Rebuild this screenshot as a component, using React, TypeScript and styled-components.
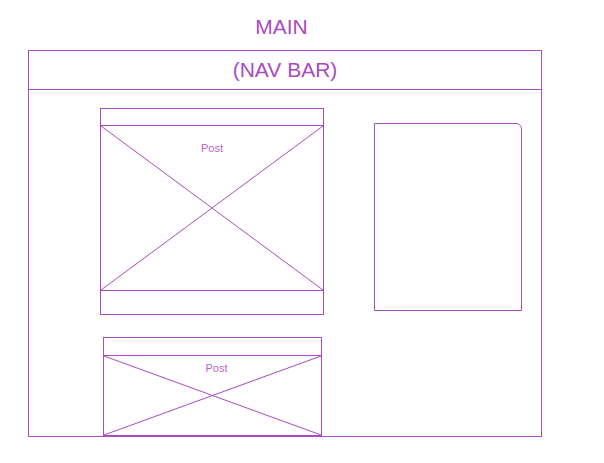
import styled, { createGlobalStyle } from "styled-components";

const ink = "#a94bc1";

const GlobalStyle = createGlobalStyle`
  body {
    margin: 0;
    background: #ffffff;
    font-family: "Liberation Sans", Arial, sans-serif;
  }
`;

const Page = styled.div`
  padding: 15px 0 0 28px;
`;

const Title = styled.h1`
  width: 507px;
  margin: 0 0 11px;
  font-size: 21px;
  font-weight: 400;
  line-height: 24px;
  text-align: center;
  color: ${ink};
`;

const Frame = styled.div`
  width: 514px;
  height: 387px;
  box-sizing: border-box;
  border: 1px solid ${ink};
  overflow: hidden;
`;

const NavBar = styled.div`
  height: 38px;
  border-bottom: 1px solid ${ink};
  display: flex;
  align-items: center;
  justify-content: center;
  font-size: 21px;
  color: ${ink};
`;

const Content = styled.div`
  display: flex;
  align-items: flex-start;
  gap: 50px;
  padding: 18px 0 0 71px;
`;

const Column = styled.div`
  display: flex;
  flex-direction: column;
  gap: 22px;
`;

const Post = styled.div<{ $width: number; $shift?: number }>`
  width: ${(p) => p.$width}px;
  margin-left: ${(p) => p.$shift ?? 0}px;
  box-sizing: border-box;
  border: 1px solid ${ink};
  display: flex;
  flex-direction: column;
`;

const PostHeader = styled.div<{ $height: number }>`
  height: ${(p) => p.$height}px;
  border-bottom: 1px solid ${ink};
`;

const PostBody = styled.div<{ $height: number; $labelTop: number; $labelShift?: number }>`
  position: relative;
  height: ${(p) => p.$height}px;
  padding-top: ${(p) => p.$labelTop}px;
  padding-left: ${(p) => p.$labelShift ?? 0}px;
  box-sizing: border-box;
  text-align: center;
  font-size: 11px;
  line-height: 13px;
  color: #b866cc;
`;

const Cross = styled.svg`
  position: absolute;
  inset: 0;
  width: 100%;
  height: 100%;
`;

const Label = styled.span`
  position: relative;
`;

const PostFooter = styled.div<{ $height: number }>`
  height: ${(p) => p.$height}px;
  border-top: 1px solid ${ink};
`;

const Sidebar = styled.div`
  width: 148px;
  height: 188px;
  margin-top: 15px;
  box-sizing: border-box;
  border: 1px solid ${ink};
  border-top-right-radius: 6px;
`;

function Placeholder() {
  return (
    <Cross viewBox="0 0 100 100" preserveAspectRatio="none">
      <line x1="0" y1="0" x2="100" y2="100" stroke={ink} strokeWidth="1" vectorEffect="non-scaling-stroke" />
      <line x1="100" y1="0" x2="0" y2="100" stroke={ink} strokeWidth="1" vectorEffect="non-scaling-stroke" />
    </Cross>
  );
}

export default function App() {
  return (
    <>
      <GlobalStyle />
      <Page>
        <Title>MAIN</Title>
        <Frame>
          <NavBar>(NAV BAR)</NavBar>
          <Content>
            <Column>
              <Post $width={224}>
                <PostHeader $height={16} />
                <PostBody $height={164} $labelTop={16}>
                  <Placeholder />
                  <Label>Post</Label>
                </PostBody>
                <PostFooter $height={23} />
              </Post>
              <Post $width={219} $shift={3}>
                <PostHeader $height={17} />
                <PostBody $height={79} $labelTop={6} $labelShift={8}>
                  <Placeholder />
                  <Label>Post</Label>
                </PostBody>
              </Post>
            </Column>
            <Sidebar />
          </Content>
        </Frame>
      </Page>
    </>
  );
}
